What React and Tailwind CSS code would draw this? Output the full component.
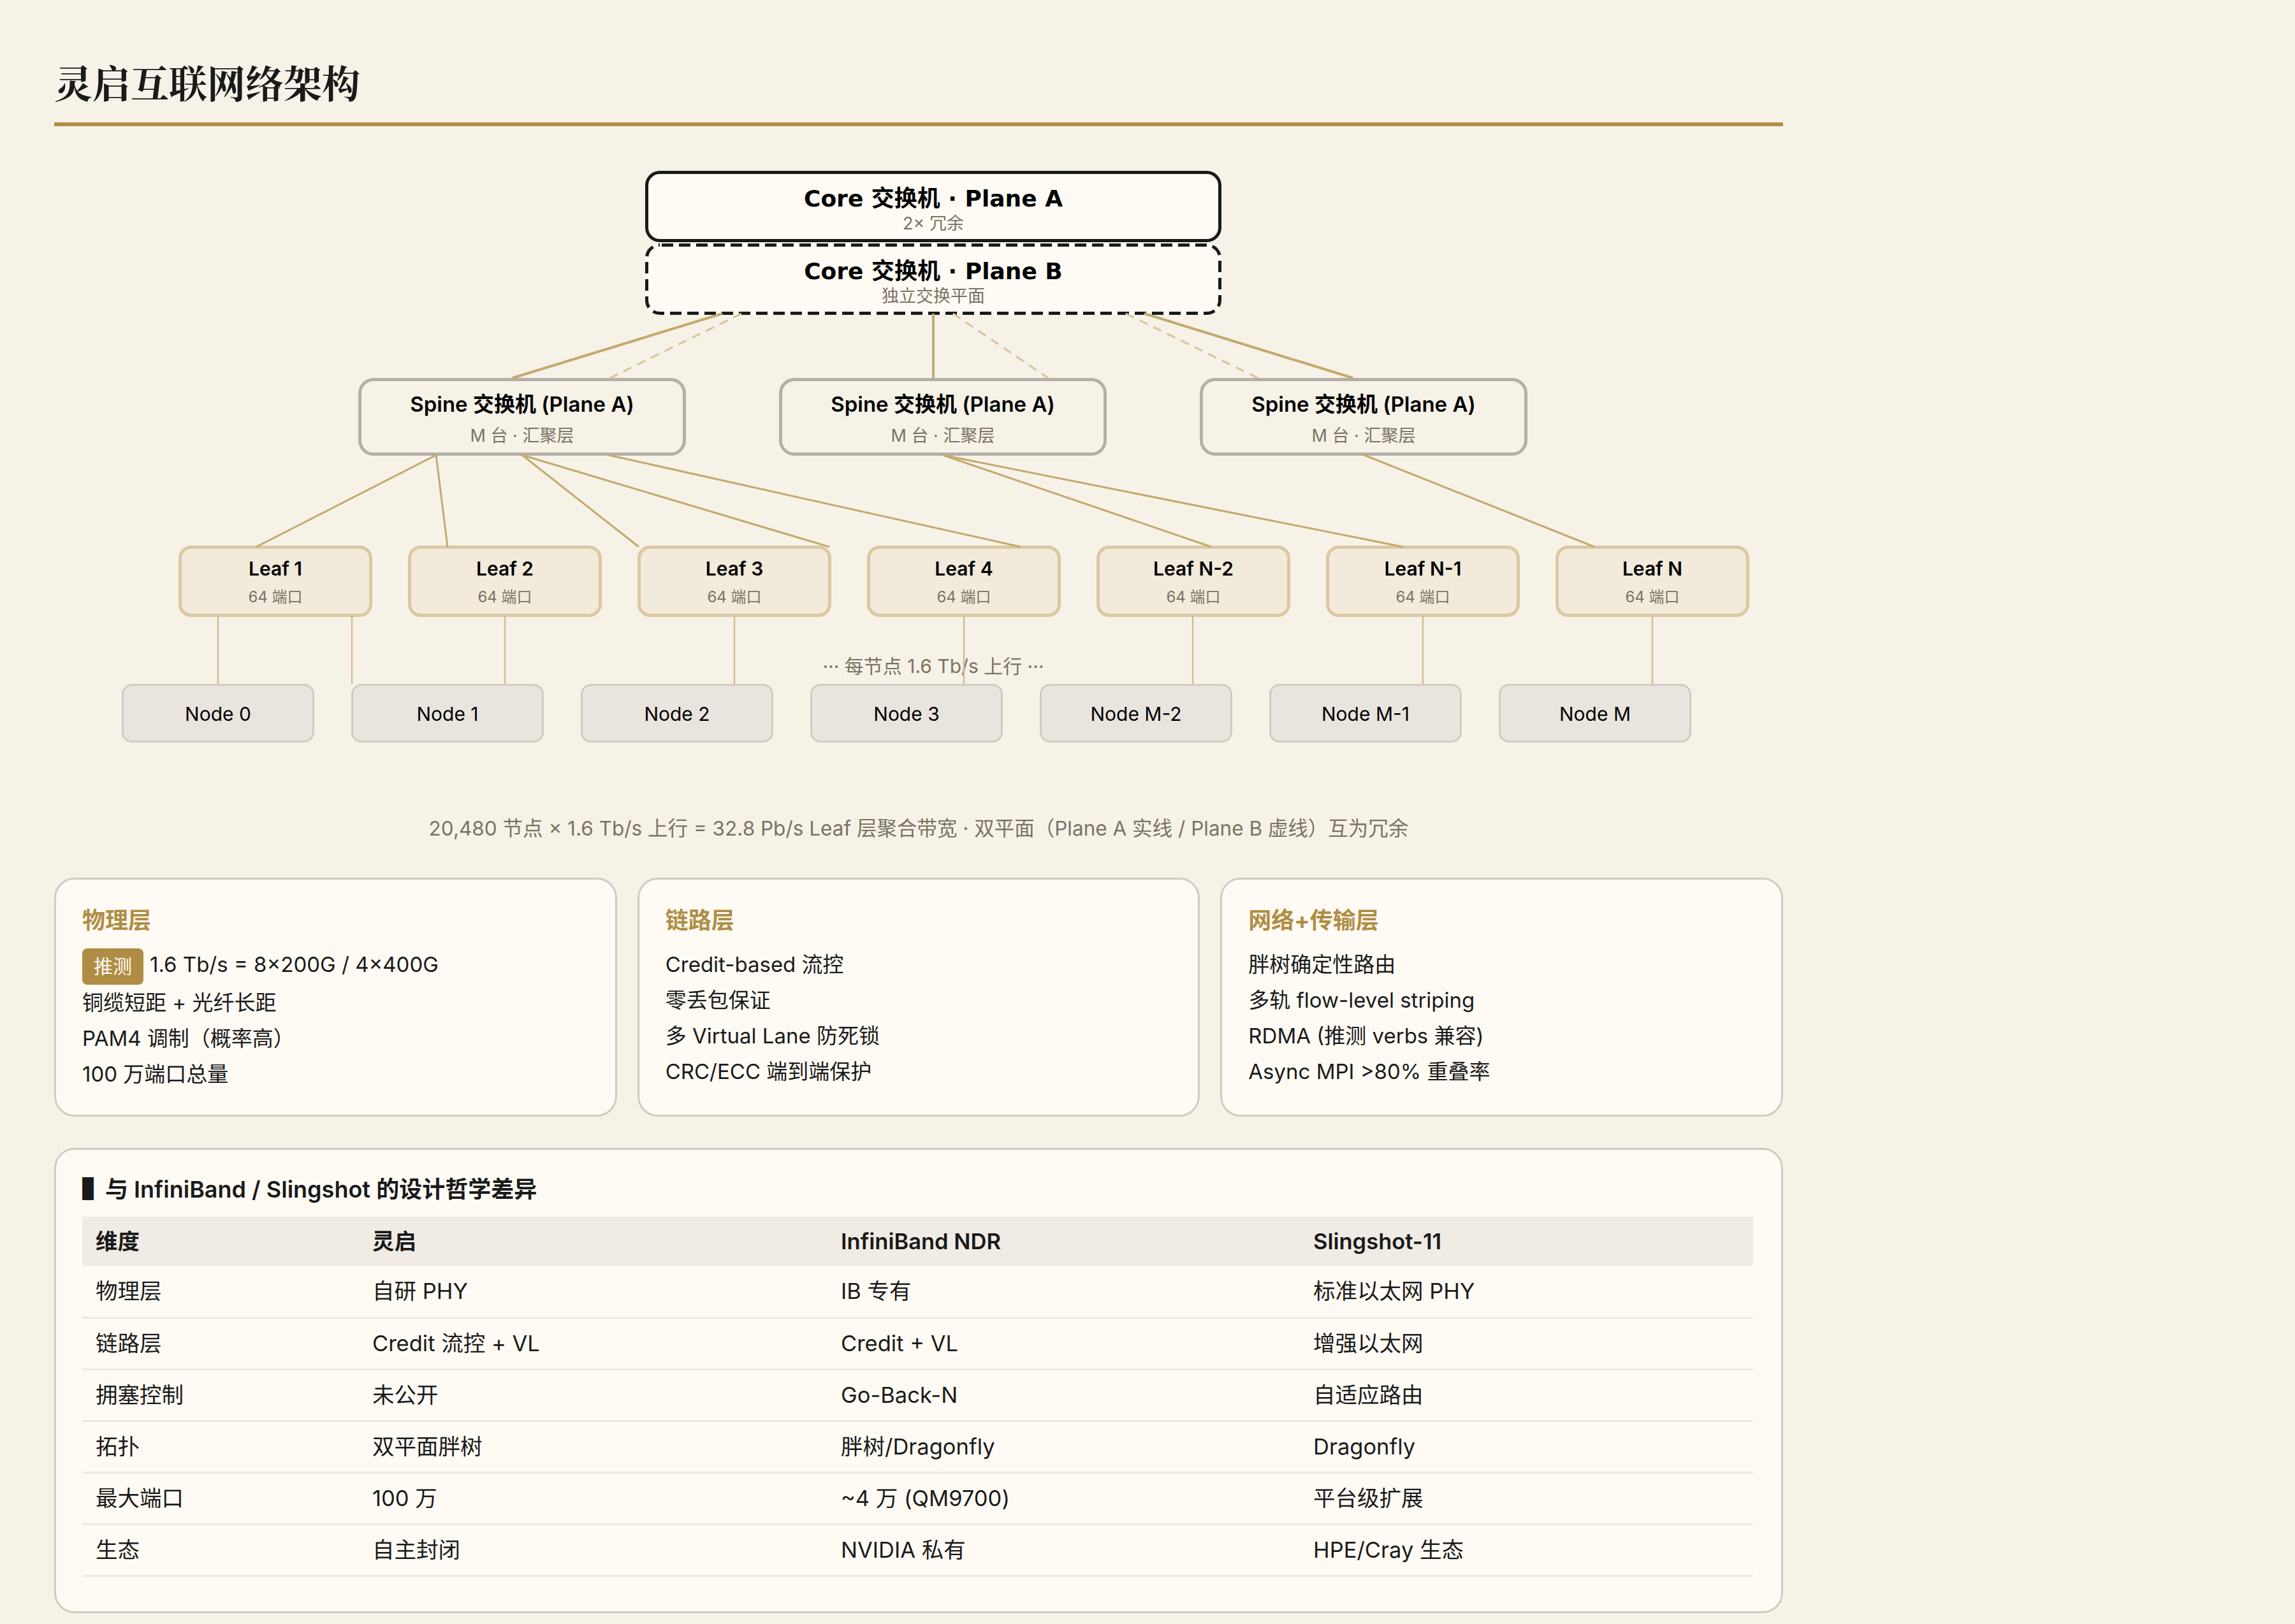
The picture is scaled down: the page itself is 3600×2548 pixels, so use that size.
const spines = [1, 2, 3];
const leaves = ["Leaf 1", "Leaf 2", "Leaf 3", "Leaf 4", "Leaf N-2", "Leaf N-1", "Leaf N"];
const nodes = ["Node 0", "Node 1", "Node 2", "Node 3", "Node M-2", "Node M-1", "Node M"];

// line coordinates are page pixels, the viewBox keeps them that way
const coreLines = [
  [1133, 492, 804, 593],
  [1464, 492, 1464, 593],
  [1795, 492, 2122, 593],
];
const coreDashed = [
  [1163, 492, 957, 593],
  [1495, 492, 1644, 593],
  [1766, 492, 1973, 593],
];
const spineLines = [
  [684, 714, 402, 858],
  [684, 714, 702, 858],
  [819, 714, 1002, 858],
  [819, 714, 1301, 858],
  [955, 714, 1601, 858],
  [1479, 714, 1900, 858],
  [1479, 714, 2201, 858],
  [2140, 714, 2501, 858],
];
const nodeLines = [342, 552, 792, 1152, 1512, 1871, 2232, 2592];

const layers = [
  {
    title: "物理层",
    lines: ["1.6 Tb/s = 8×200G / 4×400G", "铜缆短距 + 光纤长距", "PAM4 调制（概率高）", "100 万端口总量"],
    badge: true,
  },
  {
    title: "链路层",
    lines: ["Credit-based 流控", "零丢包保证", "多 Virtual Lane 防死锁", "CRC/ECC 端到端保护"],
  },
  {
    title: "网络+传输层",
    lines: ["胖树确定性路由", "多轨 flow-level striping", "RDMA (推测 verbs 兼容)", "Async MPI >80% 重叠率"],
  },
];

const rows = [
  ["物理层", "自研 PHY", "IB 专有", "标准以太网 PHY"],
  ["链路层", "Credit 流控 + VL", "Credit + VL", "增强以太网"],
  ["拥塞控制", "未公开", "Go-Back-N", "自适应路由"],
  ["拓扑", "双平面胖树", "胖树/Dragonfly", "Dragonfly"],
  ["最大端口", "100 万", "~4 万 (QM9700)", "平台级扩展"],
  ["生态", "自主封闭", "NVIDIA 私有", "HPE/Cray 生态"],
];

const App = () => {
  return (
    <div className="min-h-screen bg-[#f6f2e8] font-['Inter','Noto_Sans_CJK_SC',sans-serif] text-[#1a1a1a]">
      <div className="w-[2712px] ml-[85px] pt-[84px]">
        <h1 className="font-['Noto_Serif_CJK_SC','Liberation_Serif','Noto_Sans_CJK_SC',serif] text-[60px] leading-[88px] font-bold pb-[20px] border-b-[6px] border-[#b08d45]">
          灵启互联网络架构
        </h1>

        {/* topology */}
        <div className="relative pt-[70px]">
          <div className="ml-[927px] w-[904px]">
            <div className="h-[112px] rounded-[23px] border-[5px] border-[#1a1a1a] bg-[#fffbf4] pt-[16px] flex flex-col items-center text-black">
              <div className="font-['DejaVu_Sans','Noto_Sans_CJK_SC',sans-serif] font-bold text-[36px] leading-[46px]">Core 交换机 · Plane A</div>
              <div className="mt-[1px] text-[27px] leading-[30px] text-[#7a7264]">2× 冗余</div>
            </div>
            <div className="relative mt-[2px] h-[112px] rounded-[23px] bg-[#fffbf4] pt-[21px] flex flex-col items-center text-black">
              <svg className="absolute left-0 top-0" width="904" height="112" fill="none">
                <rect x="2.5" y="2.5" width="899" height="107" rx="20.5" stroke="#1a1a1a" strokeWidth="5" strokeDasharray="18 9" strokeDashoffset="-3" />
              </svg>
              <div className="font-['DejaVu_Sans','Noto_Sans_CJK_SC',sans-serif] font-bold text-[36px] leading-[46px]">Core 交换机 · Plane B</div>
              <div className="mt-[1px] text-[27px] leading-[30px] text-[#7a7264]">独立交换平面</div>
            </div>
          </div>

          <div className="mt-[99px] ml-[477px] flex gap-[146px]">
            {spines.map((s) => (
              <div key={s} className="w-[514px] h-[122px] rounded-[24px] border-[5px] border-[#b4b0a8] bg-[#f6f2e8] pt-[13px] flex flex-col items-center text-black">
                <div className="font-semibold text-[33px] leading-[46px]">Spine 交换机 (Plane A)</div>
                <div className="mt-[9px] text-[27px] leading-[36px] text-[#7a7264]">M 台 · 汇聚层</div>
              </div>
            ))}
          </div>

          <div className="mt-[141px] ml-[195px] flex gap-[56px]">
            {leaves.map((name) => (
              <div key={name} className="w-[304px] h-[112px] rounded-[20px] border-[5px] border-[#dcc8a0] bg-[#f2eadb] pt-[10px] flex flex-col items-center text-black">
                <div className="font-semibold text-[30px] leading-[42px]">{name}</div>
                <div className="mt-[8px] text-[24px] leading-[32px] text-[#7a7264]">64 端口</div>
              </div>
            ))}
          </div>

          <div className="mt-[57px] ml-[927px] w-[904px] h-[40px] text-center text-[30px] leading-[40px] text-[#7a7264]">
            ··· 每节点 1.6 Tb/s 上行 ···
          </div>

          <div className="mt-[8px] ml-[106px] flex gap-[58px]">
            {nodes.map((name) => (
              <div key={name} className="w-[302px] h-[92px] rounded-[16px] border-[3px] border-[#d0ccc2] bg-[#e9e5de] pt-[2px] flex items-center justify-center text-[30px] text-black">
                {name}
              </div>
            ))}
          </div>

          <svg className="absolute left-0 top-0 pointer-events-none" width="2712" height="967" viewBox="85 198 2712 967" fill="none">
            {coreLines.map(([x1, y1, x2, y2]) => (
              <line key={x1} x1={x1} y1={y1} x2={x2} y2={y2} stroke="#c4a96e" strokeWidth="4" />
            ))}
            {coreDashed.map(([x1, y1, x2, y2]) => (
              <line key={x1} x1={x1} y1={y1} x2={x2} y2={y2} stroke="#d8c49a" strokeWidth="3" strokeDasharray="14 10" />
            ))}
            {spineLines.map(([x1, y1, x2, y2]) => (
              <line key={x2} x1={x1} y1={y1} x2={x2} y2={y2} stroke="#c4a96e" strokeWidth="3" />
            ))}
            {nodeLines.map((x) => (
              <line key={x} x1={x} y1="966" x2={x} y2="1073" stroke="#d4bc90" strokeWidth="2.5" />
            ))}
          </svg>
        </div>

        <p className="mt-[111px] text-center text-[31.5px] leading-[48px] text-[#7a7264]">
          20,480 节点 × 1.6 Tb/s 上行 = 32.8 Pb/s Leaf 层聚合带宽 · 双平面（Plane A 实线 / Plane B 虚线）互为冗余
        </p>

        <div className="mt-[53px] grid grid-cols-3 gap-[32px]">
          {layers.map((layer) => (
            <div key={layer.title} className="h-[375px] rounded-[32px] border-[3px] border-[#d0ccc4] bg-[#fffbf4] px-[41px] pt-[40px]">
              <h3 className="text-[36px] leading-[48px] font-bold text-[#b08d45] mb-[17px]">{layer.title}</h3>
              <ul>
                {layer.lines.map((line, i) => (
                  <li key={line} className="text-[33px] leading-[56px]">
                    {layer.badge && i === 0 && (
                      <span className="inline-block align-middle mr-[10px] px-[18px] py-[6px] rounded-[8px] bg-[#b08d45] text-[#fffbf4] text-[30px] leading-[45px]">推测</span>
                    )}
                    {line}
                  </li>
                ))}
              </ul>
            </div>
          ))}
        </div>

        <div className="mt-[49px] rounded-[32px] border-[3px] border-[#d0ccc4] bg-[#fffbf4] pl-[41px] pr-[44px] pt-[39px] pb-[54px]">
          <h3 className="h-[46px] text-[36px] leading-[46px] font-semibold mb-[20px]">
            ▌与 InfiniBand / Slingshot 的设计哲学差异
          </h3>
          <table className="w-full table-fixed border-collapse text-[34.5px]">
            <thead>
              <tr className="bg-[#f0ece5] text-left">
                <th className="w-[434px] h-[77px] px-[21px] font-semibold">维度</th>
                <th className="w-[735px] h-[77px] px-[21px] font-semibold">灵启</th>
                <th className="w-[741px] h-[77px] px-[21px] font-semibold">InfiniBand NDR</th>
                <th className="h-[77px] px-[21px] font-semibold">Slingshot-11</th>
              </tr>
            </thead>
            <tbody>
              {rows.map((row) => (
                <tr key={row[0]} className="border-b-[3px] border-[#ece8e0]">
                  {row.map((cell) => (
                    <td key={cell} className="h-[81px] px-[21px]">{cell}</td>
                  ))}
                </tr>
              ))}
            </tbody>
          </table>
        </div>
      </div>
    </div>
  );
};

export default App;
